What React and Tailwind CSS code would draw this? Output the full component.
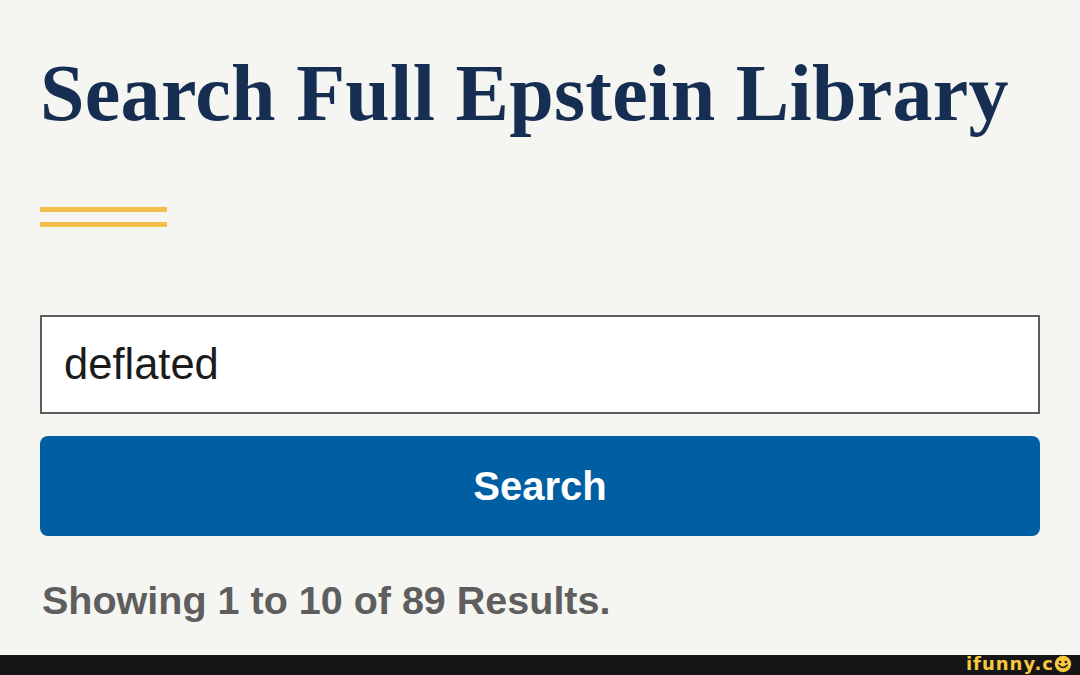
export default function App() {
  return (
    <div className="h-[675px] w-[1080px] bg-[#f5f5f1] flex flex-col overflow-hidden">
      <main className="flex-1 px-[40px]">
        <h1
          className="mt-[53px] text-[80px] leading-none font-bold text-[#162e51] whitespace-nowrap tracking-[0.3px]"
          style={{ fontFamily: '"Liberation Serif", serif' }}
        >
          Search Full Epstein Library
        </h1>

        <div className="mt-[74px] flex flex-col gap-[10px]">
          <div className="w-[127px] h-[5px] bg-[#f4be4a]" />
          <div className="w-[127px] h-[5px] bg-[#f4be4a]" />
        </div>

        <div
          className="flex flex-col"
          style={{ fontFamily: '"Liberation Sans", Arial, sans-serif' }}
        >
          <input
            type="text"
            defaultValue="deflated"
            className="mt-[88px] h-[99px] w-full border-2 border-[#5d5d5d] bg-white px-[22px] text-[43.5px] text-[#1b1b1b] outline-none"
          />
          <button className="mt-[22px] h-[100px] w-full rounded-[8px] bg-[#005ea2] text-[40px] font-bold text-white">
            Search
          </button>
          <p className="mt-[45px] text-[39.5px] leading-none font-bold text-[#5e5e5e] ml-[2px]">
            Showing 1 to 10 of 89 Results.
          </p>
        </div>
      </main>

      <footer className="h-[20px] bg-[#161616] flex justify-end items-start pr-[8px]">
        <span
          className="text-[18px] leading-[18px] font-bold text-[#f8c83c] tracking-[1px] flex items-center"
          style={{ fontFamily: '"DejaVu Sans", sans-serif' }}
        >
          ifunny.c
          <svg width="18" height="18" viewBox="0 0 22 22">
            <circle cx="11" cy="11" r="10" fill="#f8c83c" />
            <circle cx="7.5" cy="8.5" r="1.6" fill="#161616" />
            <circle cx="14.5" cy="8.5" r="1.6" fill="#161616" />
            <path d="M6 12.5 Q11 18 16 12.5" stroke="#161616" strokeWidth="2" fill="none" strokeLinecap="round" />
          </svg>
        </span>
      </footer>
    </div>
  );
}
